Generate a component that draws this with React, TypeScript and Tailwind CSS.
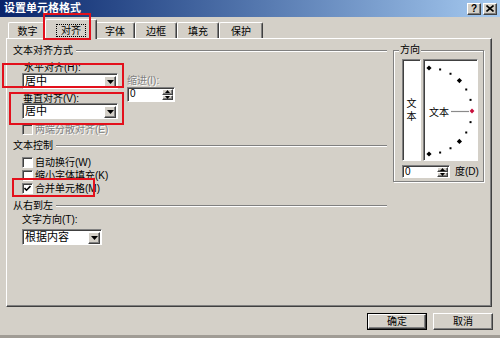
import React from "react";

const raised =
  "bg-[#d4d0c8] border border-t-white border-l-white border-r-[#404040] border-b-[#404040] shadow-[inset_-1px_-1px_0_#808080]";
const sunken =
  "border border-t-[#808080] border-l-[#808080] border-r-white border-b-white shadow-[inset_1px_1px_0_#404040]";
const disabledText = "text-[#808080] [text-shadow:1px_1px_0_#fff]";

function DownTri() {
  return (
    <svg width="7" height="4" viewBox="0 0 7 4" className="block">
      <polygon points="0,0 7,0 3.5,4" fill="#000" />
    </svg>
  );
}
function SmallTri({ up }: { up?: boolean }) {
  return (
    <svg width="5" height="3" viewBox="0 0 5 3" className="block">
      <polygon points={up ? "0,3 5,3 2.5,0" : "0,0 5,0 2.5,3"} fill="#000" />
    </svg>
  );
}

function Combo({ value, width }: { value: string; width: string }) {
  return (
    <div className={`${sunken} bg-white h-[16px] flex items-center ${width}`}>
      <span className="flex-1 pl-[2px] text-[11px] leading-[12px] whitespace-nowrap">{value}</span>
      <div className={`${raised} w-[12px] h-[12px] mr-[1px] mt-[1px] flex items-center justify-center`}>
        <DownTri />
      </div>
    </div>
  );
}

function Spin({ cls }: { cls: string }) {
  return (
    <div className={`${sunken} bg-white flex items-stretch ${cls}`}>
      <span className="flex-1 pl-[2px] text-[10px] leading-[12px]">0</span>
      <div className="flex flex-col w-[11px] my-[1px] mr-[1px]">
        <div className={`${raised} flex-1 flex items-center justify-center`}>
          <SmallTri up />
        </div>
        <div className={`${raised} flex-1 flex items-center justify-center`}>
          <SmallTri />
        </div>
      </div>
    </div>
  );
}

function Check({ label, checked, disabled }: { label: string; checked?: boolean; disabled?: boolean }) {
  return (
    <div className="flex items-center h-[13px] ml-[9px]">
      <div
        className={`w-[11px] h-[11px] ${sunken} ${disabled ? "bg-[#d4d0c8]" : "bg-white"} flex items-center justify-center`}
      >
        {checked && (
          <svg width="7" height="7" viewBox="0 0 7 7" className="block">
            <polyline points="0.5,3 2.5,5.2 6.5,1" fill="none" stroke="#000" strokeWidth="1.6" />
          </svg>
        )}
      </div>
      <span className={`ml-[2px] leading-[12px] whitespace-nowrap ${disabled ? disabledText : ""}`}>{label}</span>
    </div>
  );
}

function GroupHeader({ label }: { label: string }) {
  return (
    <div className="h-[12px] flex items-center">
      <span className="leading-[12px] whitespace-nowrap">{label}</span>
      <div className="flex-1 ml-[3px] h-[2px] border-t border-t-[#808080] border-b border-b-white" />
    </div>
  );
}

function Dial() {
  const cx = 6;
  const cy = 52;
  const r = 43;
  const small = [-75, -60, -30, -15, 15, 30, 60, 75];
  const big = [-90, -45, 45, 90];
  const pt = (a: number) => {
    const t = (a * Math.PI) / 180;
    return [cx + r * Math.cos(t), cy + r * Math.sin(t)];
  };
  return (
    <svg width="53" height="100" viewBox="1 1 53 100" className="block">
      {small.map((a) => {
        const [x, y] = pt(a);
        return <rect key={a} x={x - 1} y={y - 1} width="2" height="2" fill="#000" />;
      })}
      {big.map((a) => {
        const [x, y] = pt(a);
        return (
          <polygon
            key={a}
            points={`${x},${y - 2.6} ${x + 2.6},${y} ${x},${y + 2.6} ${x - 2.6},${y}`}
            fill="#000"
          />
        );
      })}
      <line x1="28" y1="52.5" x2="46" y2="52.5" stroke="#8a8a8a" strokeWidth="1.2" />
      <polygon points="49,49.6 51.4,52 49,54.4 46.6,52" fill="#c8103c" />
      <text
        x="6"
        y="56.5"
        fontSize="10"
        fill="#000"
        style={{ fontFamily: "'Liberation Sans', 'Noto Sans CJK SC', sans-serif" }}
      >
        文本
      </text>
    </svg>
  );
}

const tabs = [
  { label: "数字", w: "w-[39px]" },
  { label: "对齐", w: "w-[52px]", selected: true },
  { label: "字体", w: "w-[40px]" },
  { label: "边框", w: "w-[42px]" },
  { label: "填充", w: "w-[42px]" },
  { label: "保护", w: "w-[44px]" },
];

export default function App() {
  return (
    <div className="relative w-[500px] h-[338px] overflow-hidden bg-[#d4d0c8] flex flex-col font-['Liberation_Sans','Noto_Sans_CJK_SC',sans-serif] text-[10px] leading-[12px] text-black select-none">
      {/* Title bar */}
      <div className="h-[17px] shrink-0 flex items-center justify-between pl-[4px] pr-[3px] bg-gradient-to-r from-[#0a246a] to-[#a6caf0]">
        <span className="text-white font-bold text-[11px] leading-[13px] whitespace-nowrap">设置单元格格式</span>
        <div className="flex gap-[2px]">
          <div className={`${raised} w-[14px] h-[12px] flex items-center justify-center`}>
            <span className="font-bold text-[10px] leading-[10px]">?</span>
          </div>
          <div className={`${raised} w-[14px] h-[12px] flex items-center justify-center`}>
            <svg width="8" height="7" viewBox="0 0 8 7" className="block">
              <path d="M0.5 0.5 L7.5 6.5 M7.5 0.5 L0.5 6.5" stroke="#000" strokeWidth="1.6" />
            </svg>
          </div>
        </div>
      </div>

      {/* Tabs */}
      <div className="h-[21px] shrink-0 flex items-end pl-[8px]">
        {tabs.map((t) =>
          t.selected ? (
            <div
              key={t.label}
              className={`relative z-10 -mx-[2px] -mb-px h-[20px] ${t.w} bg-[#d4d0c8] border-l border-t border-white border-r border-r-[#404040] rounded-t-[2px] shadow-[inset_-1px_0_0_#808080] flex justify-center items-start pt-[4px]`}
            >
              <span className="h-[13px] px-[4px] leading-[12px] border border-dotted border-black">{t.label}</span>
            </div>
          ) : (
            <div
              key={t.label}
              className={`h-[16px] ${t.w} border-l border-t border-white border-r border-r-[#404040] rounded-t-[2px] shadow-[inset_-1px_0_0_#808080] flex items-center justify-center pt-[2px]`}
            >
              <span className="leading-[12px]">{t.label}</span>
            </div>
          )
        )}
      </div>

      {/* Panel */}
      <div className="ml-[6px] mr-[8px] h-[269px] shrink-0 flex border border-t-white border-l-white border-r-[#404040] border-b-[#404040] shadow-[inset_-1px_-1px_0_#808080]">
        {/* Left column */}
        <div className="w-[380px] pl-[6px] flex flex-col">
          <div className="mt-[6px]">
            <GroupHeader label="文本对齐方式" />
          </div>
          <div className="flex">
            <div className="ml-[9px] w-[96px] flex flex-col">
              <div className="mt-[5px] h-[11px] leading-[12px] pl-[2px] whitespace-nowrap">水平对齐(H):</div>
              <Combo value="居中" width="w-[96px]" />
              <div className="mt-[4px] h-[10px] leading-[11px] pl-[1px] whitespace-nowrap">垂直对齐(V):</div>
              <Combo value="居中" width="w-[96px]" />
            </div>
            <div className="ml-[9px] mt-[18px] flex flex-col">
              <div className={`h-[12px] leading-[12px] whitespace-nowrap ${disabledText}`}>缩进(I):</div>
              <Spin cls="w-[48px] h-[15px]" />
            </div>
          </div>
          <div className="mt-[4px]">
            <Check label="两端分散对齐(E)" disabled />
          </div>
          <div className="mt-[4px]">
            <GroupHeader label="文本控制" />
          </div>
          <div className="mt-[4px] flex flex-col">
            <Check label="自动换行(W)" />
            <Check label="缩小字体填充(K)" />
            <Check label="合并单元格(M)" checked />
          </div>
          <div className="mt-[5px]">
            <GroupHeader label="从右到左" />
          </div>
          <div className="mt-[2px] ml-[9px] h-[12px] leading-[12px] whitespace-nowrap">文字方向(T):</div>
          <div className="mt-[3px] ml-[9px]">
            <Combo value="根据内容" width="w-[80px]" />
          </div>
        </div>

        {/* Orientation */}
        <fieldset className="ml-[6px] mt-[5px] self-start w-[91px] min-w-0 px-0 border border-[#808080] shadow-[inset_1px_1px_0_#fff,1px_1px_0_#fff]">
          <legend className="ml-[5px] px-[1px] h-[12px] leading-[12px] bg-[#d4d0c8]">方向</legend>
          <div className="pl-[8px] pt-[3px] pb-[3px] flex flex-col">
            <div className="flex gap-[2px] h-[102px]">
              <div className={`w-[19px] h-[102px] bg-white ${sunken} flex flex-col items-center justify-center leading-[13px]`}>
                <span>文</span>
                <span>本</span>
              </div>
              <div className={`w-[55px] h-[102px] bg-white ${sunken}`}>
                <Dial />
              </div>
            </div>
            <div className="mt-[4px] flex items-center">
              <Spin cls="w-[48px] h-[13px]" />
              <span className="ml-[5px] leading-[12px] whitespace-nowrap">度(D)</span>
            </div>
          </div>
        </fieldset>
      </div>

      {/* Buttons */}
      <div className="mt-[6px] flex justify-end gap-[6px] pr-[7px]">
        <div className="w-[60px] h-[17px] border border-black flex">
          <div className={`${raised} flex-1 flex items-center justify-center`}>
            <span className="leading-[12px]">确定</span>
          </div>
        </div>
        <div className={`${raised} w-[60px] h-[17px] flex items-center justify-center`}>
          <span className="leading-[12px]">取消</span>
        </div>
      </div>

      <div className="mt-auto h-[3px] bg-[#a09c95]" />

      {/* Red annotation boxes */}
      <div className="absolute z-20 left-[43px] top-[13px] w-[48px] h-[27px] border-2 border-[#e3101c]" />
      <div className="absolute z-20 left-[2px] top-[63px] w-[122px] h-[25px] border-2 border-[#e3101c]" />
      <div className="absolute z-20 left-[9px] top-[92px] w-[115px] h-[33px] border-2 border-[#e3101c]" />
      <div className="absolute z-20 left-[12px] top-[178px] w-[83px] h-[19px] border-2 border-[#e3101c]" />
    </div>
  );
}
